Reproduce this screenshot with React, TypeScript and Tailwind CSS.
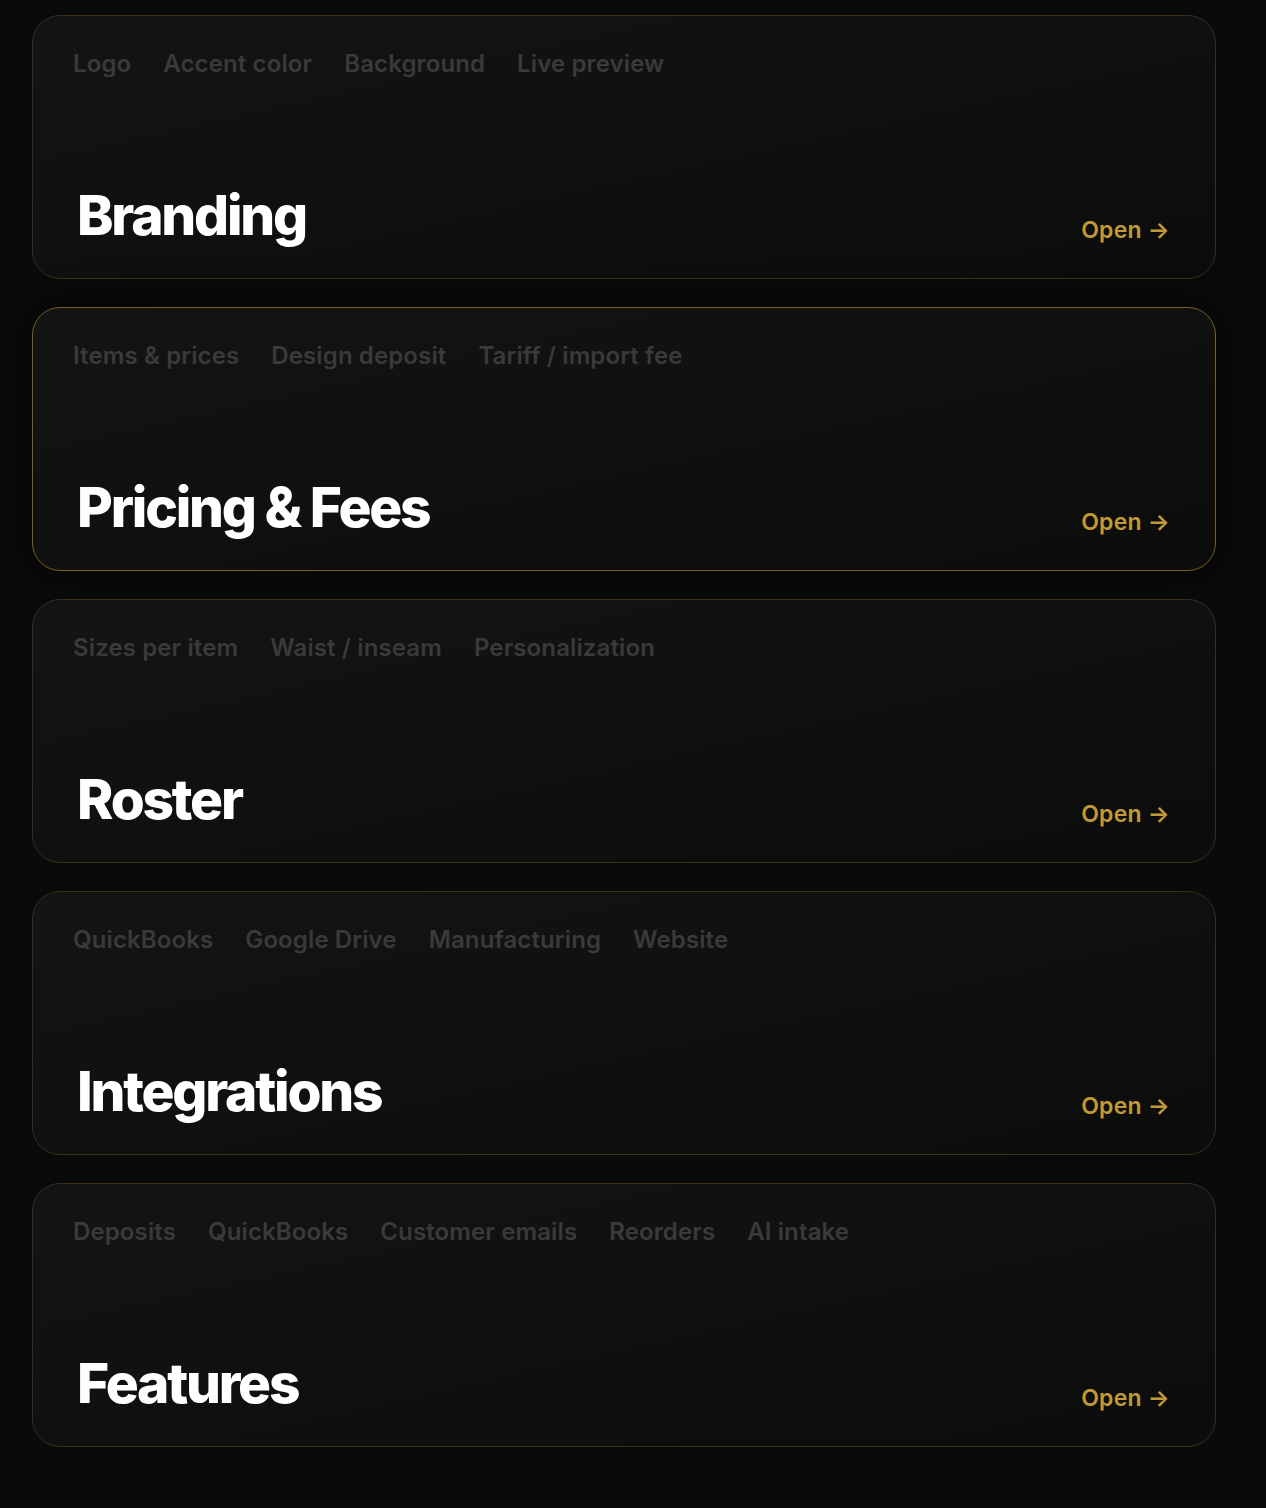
import React from 'react';

type Section = {
  title: string;
  tags: string[];
  active?: boolean;
};

const SECTIONS: Section[] = [
  { title: 'Branding', tags: ['Logo', 'Accent color', 'Background', 'Live preview'] },
  { title: 'Pricing & Fees', tags: ['Items & prices', 'Design deposit', 'Tariff / import fee'], active: true },
  { title: 'Roster', tags: ['Sizes per item', 'Waist / inseam', 'Personalization'] },
  { title: 'Integrations', tags: ['QuickBooks', 'Google Drive', 'Manufacturing', 'Website'] },
  { title: 'Features', tags: ['Deposits', 'QuickBooks', 'Customer emails', 'Reorders', 'AI intake'] },
];

const SectionCard: React.FC<{ section: Section }> = ({ section }) => (
  <a
    href="#"
    className={`flex h-[264px] flex-col justify-between rounded-[28px] border bg-gradient-to-br from-[#141414] to-[#0c0c0c] px-10 pt-8 pb-8 transition-colors ${
      section.active
        ? 'border-[#7a5f22] shadow-[0_0_40px_rgba(0,0,0,0.6)]'
        : 'border-[#3b2f17] hover:border-[#7a5f22]'
    }`}
  >
    {/* Tags */}
    <div className="flex flex-wrap gap-x-8 text-[24px] leading-8 font-semibold tracking-[0.005em] text-[#3a3a3a]">
      {section.tags.map(t => (
        <span key={t}>{t}</span>
      ))}
    </div>

    {/* Title + open link */}
    <div className="flex items-end justify-between">
      <h2 className="mb-[-2px] pl-1 text-[55px] leading-[1.2] font-extrabold tracking-[-0.04em] text-white">{section.title}</h2>
      <span className="pr-[5px] text-[23px] leading-8 font-semibold tracking-[0.01em] text-[#c19a38]">Open →</span>
    </div>
  </a>
);

export default function App() {
  return (
    <div
      className="min-h-screen bg-[#0a0a0a] pl-8 pr-[50px] pt-[15px] pb-16"
      style={{ fontFamily: 'Inter, "Noto Sans", sans-serif' }}
    >
      <div className="flex flex-col gap-7">
        {SECTIONS.map(s => (
          <SectionCard key={s.title} section={s} />
        ))}
      </div>
    </div>
  );
}
